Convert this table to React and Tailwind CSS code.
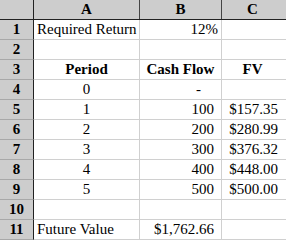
const rows = [
  { n: 1, a: "Required Return", aAlign: "left", b: "12%", bPad: "pr-[3px]", c: "" },
  { n: 2, a: "", b: "", c: "" },
  { n: 3, a: "Period", aAlign: "center", b: "Cash Flow", bAlign: "center", c: "FV", cAlign: "center", bold: true },
  { n: 4, a: "0", aAlign: "center", b: "-", bPad: "pr-[20px]", c: "" },
  { n: 5, a: "1", aAlign: "center", b: "100", c: "$157.35" },
  { n: 6, a: "2", aAlign: "center", b: "200", c: "$280.99" },
  { n: 7, a: "3", aAlign: "center", b: "300", c: "$376.32" },
  { n: 8, a: "4", aAlign: "center", b: "400", c: "$448.00" },
  { n: 9, a: "5", aAlign: "center", b: "500", c: "$500.00" },
  { n: 10, a: "", b: "", c: "" },
  { n: 11, a: "Future Value", aAlign: "left", b: "$1,762.66", c: "" },
];

function alignCls(al) {
  if (al === "center") return "justify-center";
  if (al === "left") return "justify-start pl-[3px]";
  return "justify-end";
}

export default function App() {
  return (
    <div
      className="w-[286px] h-[241px] overflow-hidden bg-white text-black text-[15px] leading-none"
      style={{ fontFamily: '"Liberation Serif", "Times New Roman", serif' }}
    >
      <div className="flex h-[20px] bg-[#cdcdcd] border-b border-[#222]">
        <div className="w-[34px] shrink-0 border-r border-[#222]" />
        <div className="w-[106px] shrink-0 border-r border-[#444] flex items-center justify-center font-bold">A</div>
        <div className="w-[82px] shrink-0 border-r border-[#444] flex items-center justify-center font-bold">B</div>
        <div className="flex-1 flex items-center justify-center font-bold pr-[3px]">C</div>
      </div>
      {rows.map((r) => (
        <div key={r.n} className="flex h-[20px]">
          <div className="w-[34px] shrink-0 bg-[#cdcdcd] border-r border-[#222] border-b border-b-[#a8a8a8] flex items-center justify-center font-bold">
            {r.n}
          </div>
          <div
            className={`w-[106px] shrink-0 border-r border-b border-[#d0d0d0] flex items-center ${alignCls(r.aAlign)} ${r.bold ? "font-bold" : ""}`}
          >
            {r.a}
          </div>
          <div
            className={`w-[82px] shrink-0 border-r border-b border-[#d0d0d0] flex items-center ${r.bAlign === "center" ? "justify-center" : "justify-end " + (r.bPad || "pr-[7px]")} ${r.bold ? "font-bold" : ""}`}
          >
            {r.b}
          </div>
          <div
            className={`flex-1 border-b border-[#d0d0d0] flex items-center ${r.cAlign === "center" ? "justify-center pr-[3px]" : "justify-end pr-[8px]"} ${r.bold ? "font-bold" : ""}`}
          >
            {r.c}
          </div>
        </div>
      ))}
    </div>
  );
}
